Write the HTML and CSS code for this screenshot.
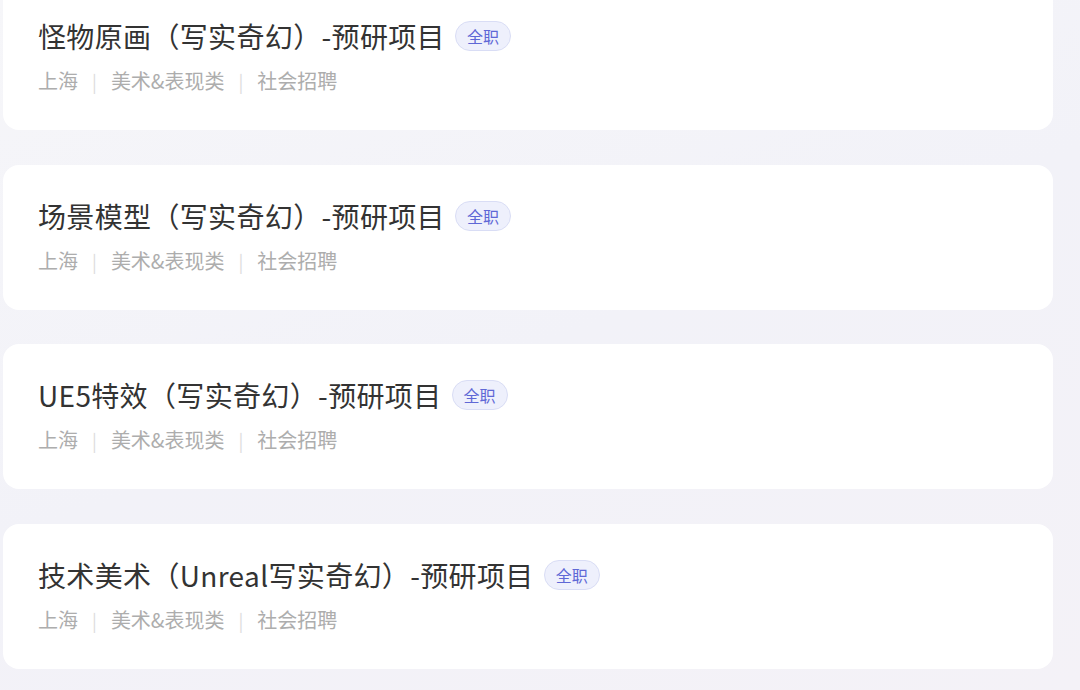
FILE: index.html
```html
<!DOCTYPE html>
<html lang="zh">

<head>
    <meta charset="UTF-8">
    <meta name="viewport" content="width=device-width, initial-scale=1.0">
    <title>职位列表</title>
    <link rel="stylesheet" href="styles.css">
</head>

<body>
    <div class="job-list">
        <div class="job-card">
            <div class="job-title">
                <span class="name">怪物原画（写实奇幻）-预研项目</span>
                <span class="tag">全职</span>
            </div>
            <div class="job-meta">
                <span>上海</span><span class="sep">|</span><span>美术&amp;表现类</span><span class="sep">|</span><span>社会招聘</span>
            </div>
        </div>
        <div class="job-card">
            <div class="job-title">
                <span class="name">场景模型（写实奇幻）-预研项目</span>
                <span class="tag">全职</span>
            </div>
            <div class="job-meta">
                <span>上海</span><span class="sep">|</span><span>美术&amp;表现类</span><span class="sep">|</span><span>社会招聘</span>
            </div>
        </div>
        <div class="job-card">
            <div class="job-title">
                <span class="name">UE5特效（写实奇幻）-预研项目</span>
                <span class="tag">全职</span>
            </div>
            <div class="job-meta">
                <span>上海</span><span class="sep">|</span><span>美术&amp;表现类</span><span class="sep">|</span><span>社会招聘</span>
            </div>
        </div>
        <div class="job-card">
            <div class="job-title">
                <span class="name">技术美术（Unreal写实奇幻）-预研项目</span>
                <span class="tag">全职</span>
            </div>
            <div class="job-meta">
                <span>上海</span><span class="sep">|</span><span>美术&amp;表现类</span><span class="sep">|</span><span>社会招聘</span>
            </div>
        </div>
    </div>
</body>
</html>
```

FILE: styles.css
```css
html, body {
    height: 100%;
}
body {
    margin: 0;
    padding: 0;
    font-family: "Noto Sans CJK SC", "Noto Sans", sans-serif;
    background: linear-gradient(160deg, #f6f6f9 0%, #f2f2f8 50%, #f4f2f7 100%);
    overflow: hidden;
}
.job-list {
    display: flex;
    flex-direction: column;
    gap: 34.5px;
    width: 1050px;
    margin-top: -15px;
    margin-left: 3px;
}
.job-card {
    height: 145px;
    box-sizing: border-box;
    padding: 33px 35px 0;
    background: #fff;
    border-radius: 16px;
}
.job-title {
    display: flex;
    align-items: center;
    height: 36px;
}
.job-title .name {
    font-size: 28px;
    line-height: 36px;
    letter-spacing: 0.35px;
    color: #333;
}
.tag {
    margin-left: 10px;
    height: 28px;
    padding: 0 11px;
    font-size: 16px;
    line-height: 28px;
    color: #5f68d6;
    background: #eef0fc;
    border: 1px solid #d9ddf5;
    border-radius: 15px;
}
.job-meta {
    margin-top: 13px;
    font-size: 20px;
    line-height: 28px;
    color: #adadad;
}
.job-meta .sep {
    margin: 0 14px;
    color: #ddd;
    font-size: 18px;
}
```
